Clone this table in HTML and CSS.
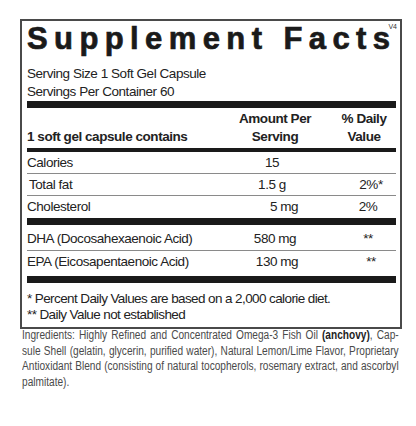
FILE: index.html
```html
<!DOCTYPE html>
<html>
<head>
<meta charset="utf-8">
<link rel="stylesheet" href="styles.css">
</head>
<body>
<div class="label">
  <div class="title-row">
    <h1 class="title">Supplement Facts</h1>
  </div>
  <span class="version">V4</span>
  <div class="serving">Serving Size 1 Soft Gel Capsule</div>
  <div class="serving">Servings Per Container 60</div>
  <div class="bar bar-thick"></div>
  <div class="row head">
    <div class="c-name">1 soft gel capsule contains</div>
    <div class="c-amt">Amount Per<br>Serving</div>
    <div class="c-dv">% Daily<br>Value</div>
  </div>
  <div class="bar bar-mid"></div>
  <div class="row item">
    <div class="c-name">Calories</div>
    <div class="c-amt">15</div>
    <div class="c-dv"></div>
  </div>
  <div class="row item">
    <div class="c-name indent">Total fat</div>
    <div class="c-amt">1.5 g</div>
    <div class="c-dv dv-star">2%*</div>
  </div>
  <div class="row item last">
    <div class="c-name">Cholesterol</div>
    <div class="c-amt shift-lg">5 mg</div>
    <div class="c-dv">2%</div>
  </div>
  <div class="bar bar-thick"></div>
  <div class="row item tall first">
    <div class="c-name">DHA (Docosahexaenoic Acid)</div>
    <div class="c-amt shift-sm">580 mg</div>
    <div class="c-dv">**</div>
  </div>
  <div class="row item tall last">
    <div class="c-name">EPA (Eicosapentaenoic Acid)</div>
    <div class="c-amt shift-md">130 mg</div>
    <div class="c-dv dv-nudge">**</div>
  </div>
  <div class="bar bar-thick"></div>
  <div class="notes">
    <div>* Percent Daily Values are based on a 2,000 calorie diet.</div>
    <div>** Daily Value not established</div>
  </div>
</div>
<div class="ingredients-wrap">
  <p class="ingredients">Ingredients: Highly Refined and Concentrated Omega-3 Fish Oil <b>(anchovy)</b>, Cap&shy;sule Shell (gelatin, glycerin, purified water), Natural Lemon/Lime Flavor, Proprietary Antioxidant Blend (consisting of natural tocopherols, rosemary extract, and ascorbyl palmitate).</p>
</div>
</body>
</html>
```

FILE: styles.css
```css
html, body {
  margin: 0;
  padding: 0;
  background: #ffffff;
  overflow: hidden;
}
body {
  font-family: "Liberation Sans", Arial, sans-serif;
  color: #222;
}
.label {
  position: relative;
  margin: 19px 0 0 20px;
  width: 382px;
  box-sizing: border-box;
  border: 2px solid #4a4a4a;
  padding: 0 4px 0 5px;
}
.title-row {
  display: flex;
  align-items: flex-start;
  height: 44px;
}
.title {
  margin: 0;
  font-weight: bold;
  font-size: 31px;
  line-height: 36px;
  letter-spacing: 6.4px;
  color: #1a1a1a;
  -webkit-text-stroke: 0.7px #1a1a1a;
  white-space: nowrap;
}
.version {
  position: absolute;
  top: 2px;
  right: 3px;
  font-size: 7px;
  line-height: 8px;
  color: #333;
}
.serving,
.row,
.notes {
  font-size: 13.5px;
  letter-spacing: -0.45px;
}
.serving {
  line-height: 18px;
}
.bar {
  background: #1a1a1a;
}
.bar-thick { height: 7px; }
.bar-mid { height: 4px; }
.row {
  display: grid;
  grid-template-columns: 205px 80px 1fr;
  align-items: end;
}
.head {
  font-weight: bold;
  line-height: 18px;
  padding: 2px 0 2px;
}
.c-amt, .c-dv {
  text-align: center;
}
.head .c-amt { padding-left: 6px; }
.head .c-dv { padding-left: 20px; }
.item {
  line-height: 21px;
  border-bottom: 1px solid #8a8a8a;
}
.item.tall { line-height: 22px; }
.item.first { padding-top: 3px; }
.item.last { border-bottom: 0; padding-bottom: 1px; }
.item.tall.last { padding-bottom: 3px; }
.item .c-dv { padding-left: 28px; }
.item .c-dv.dv-star { padding-left: 34px; }
.item .c-dv.dv-nudge { padding-left: 34px; }
.indent { padding-left: 2px; }
.shift-sm { padding-left: 6px; }
.shift-md { padding-left: 10px; }
.shift-lg { padding-left: 24px; }
.notes {
  letter-spacing: -0.6px;
  line-height: 16px;
  padding: 8px 0 4px;
}
.ingredients-wrap {
  margin: -1px 0 0 22px;
  width: 377px;
  overflow: hidden;
}
.ingredients {
  margin: 0;
  width: 465px;
  transform: scaleX(0.81);
  transform-origin: 0 0;
  font-size: 12.5px;
  line-height: 15.5px;
  color: #4a4a4a;
  text-align: justify;
}
.ingredients b { color: #222; }
```
